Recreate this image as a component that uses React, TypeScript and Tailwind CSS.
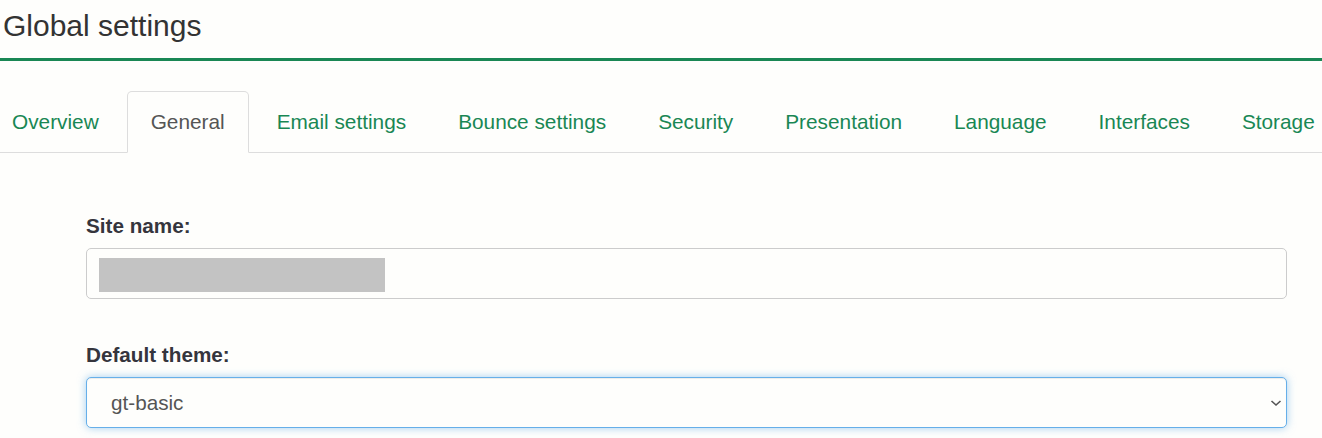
const tabs = [
  'Overview',
  'General',
  'Email settings',
  'Bounce settings',
  'Security',
  'Presentation',
  'Language',
  'Interfaces',
  'Storage',
];

const font = { fontFamily: '"Liberation Sans", Arial, sans-serif' };

export default function App() {
  return (
    <div
      className="h-[438px] w-[1322px] overflow-hidden bg-[#fefefc] text-[#333]"
      style={font}
    >
      {/* page heading */}
      <div className="border-b-[3px] border-[#198754] pb-[14px] pl-[3px] pt-[8px]">
        <h1 className="text-[30px] leading-[36px] font-normal text-[#333]">Global settings</h1>
      </div>

      {/* tabs */}
      <ul className="mt-[30px] flex whitespace-nowrap border-b border-[#ddd] pl-0">
        {tabs.map((t, i) => {
          const active = t === 'General';
          return (
            <li key={t} className={`-mb-px mr-[4px] ${i === 0 ? '-ml-[12px]' : ''}`}>
              <a
                href="#"
                className={
                  active
                    ? 'block rounded-t-[5px] border border-[#ddd] border-b-transparent bg-[#fefefc] px-[23px] py-[15px] text-[20.8px] leading-[30px] text-[#555]'
                    : 'block rounded-t-[5px] border border-transparent px-[23px] py-[15px] text-[20.8px] leading-[30px] text-[#198754]'
                }
              >
                {t}
              </a>
            </li>
          );
        })}
      </ul>

      {/* form */}
      <div className="pl-[86px] pr-[35px] pt-[58px]">
        <label className="block text-[20.7px] font-bold leading-[30px] text-[#35353d]">Site name:</label>
        <div className="mt-[7px] flex h-[51px] items-center rounded-[5px] border border-[#ccc] bg-[#fefefc] pl-[12px]">
          <div className="mt-[3px] h-[34px] w-[286px] bg-[#c3c3c3]" />
        </div>

        <label className="mt-[41px] block text-[20.7px] font-bold leading-[30px] text-[#35353d]">
          Default theme:
        </label>
        <div className="mt-[7px] flex h-[51px] items-center justify-between rounded-[5px] border border-[#66afe9] bg-[#fefefc] pl-[24px] pr-[3px] shadow-[inset_0_1px_1px_rgba(0,0,0,0.075),0_0_8px_rgba(102,175,233,0.6)]">
          <span className="text-[20.7px] leading-[30px] text-[#555]">gt-basic</span>
          <svg width="12" height="8" viewBox="0 0 12 8" className="mr-[1px]">
            <path d="M1.5 2 L6 6 L10.5 2" fill="none" stroke="#555" strokeWidth="1.6" />
          </svg>
        </div>
      </div>
    </div>
  );
}
